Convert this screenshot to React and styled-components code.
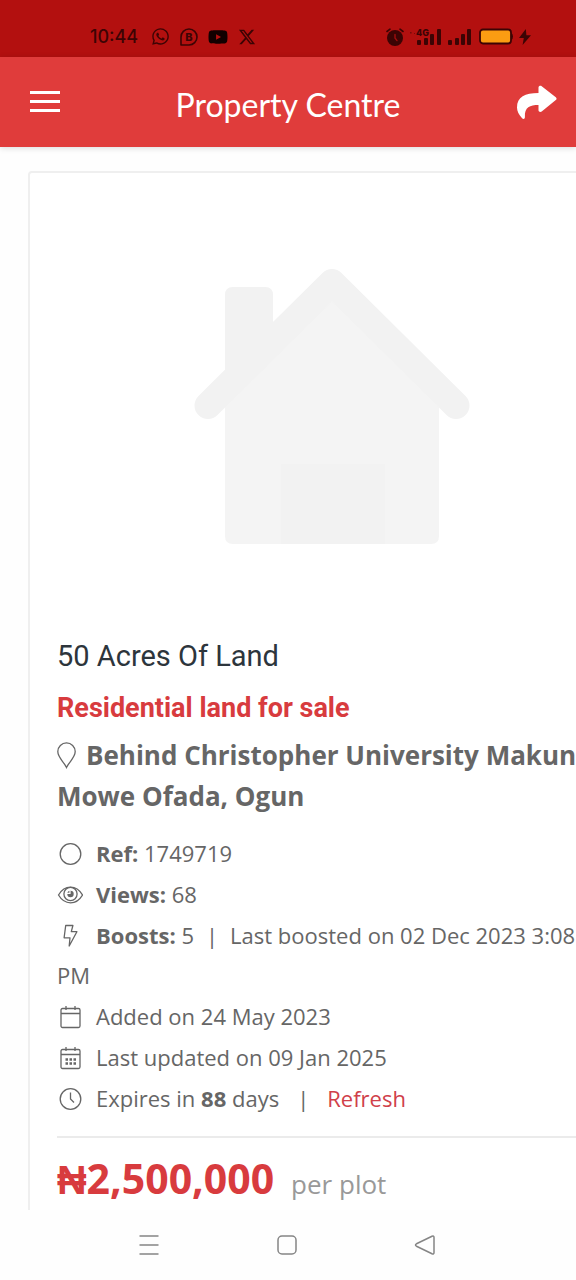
import React from 'react';
import styled, { createGlobalStyle } from 'styled-components';
import { FaWhatsapp, FaYoutube } from 'react-icons/fa';
import { FaXTwitter } from 'react-icons/fa6';

const GlobalStyle = createGlobalStyle`
  * {
    box-sizing: border-box;
  }

  body {
    margin: 0;
    background: #fefefe;
    color: #666;
    font-family: 'Open Sans', sans-serif;
  }
`;

const Screen = styled.div`
  display: flex;
  flex-direction: column;
  height: 100vh;
`;

const StatusBar = styled.div`
  display: flex;
  flex: none;
  align-items: center;
  justify-content: space-between;
  padding: 24px 45px 8px 90px;
  background: #b3100f;
  color: #3c0404;
`;

const StatusGroup = styled.div`
  display: flex;
  align-items: center;
  gap: ${({ $gap }) => $gap}px;

  svg {
    display: block;
  }
`;

const Clock = styled.time`
  margin-right: 3px;
  font: 500 18px/25px Inter, sans-serif;
`;

const Header = styled.header`
  position: relative;
  display: flex;
  flex: none;
  align-items: center;
  justify-content: space-between;
  padding: 0 19px 0 30px;
  height: 90px;
  background: #e03c3b;
  color: #fff;
  box-shadow: 0 1px 6px rgba(0, 0, 0, 0.15);
`;

const IconButton = styled.button`
  display: flex;
  padding: 0;
  border: 0;
  background: none;
  color: inherit;
`;

const Brand = styled.a`
  padding-top: 6px;
  color: #fff;
  font: 400 32px/44px Lato, sans-serif;
  text-decoration: none;
`;

const Main = styled.main`
  flex: 1;
  min-height: 0;
  overflow: hidden auto;
  scrollbar-width: none;
`;

/* the listing card is wider than the phone, so it runs off to the right */
const Card = styled.article`
  margin: 24px -60px 24px 28px;
  padding: 0 27px 60px;
  border: 2px solid #efefef;
  border-radius: 4px;
  background: #fff;
`;

const Placeholder = styled.div`
  display: flex;
  justify-content: center;
  padding: 95px 0;
`;

const Title = styled.h1`
  margin: 0 0 18px;
  color: #2d353c;
  font: 400 29px/34px Roboto, sans-serif;
`;

const Category = styled.h2`
  margin: 0 0 10px;
  color: #d83b3e;
  font: 700 27px/34px Roboto, sans-serif;
`;

const Address = styled.address`
  margin-bottom: 16px;
  font-size: 26px;
  font-style: normal;
  font-weight: 700;
  line-height: 41px;

  svg {
    margin-right: 10px;
    vertical-align: -4px;
  }
`;

const Details = styled.ul`
  display: grid;
  gap: 1px;
  margin: 0 0 18px;
  padding: 0;
  list-style: none;
  font-size: 22px;
  line-height: 40px;
`;

const Detail = styled.li`
  svg {
    margin-right: 13px;
    vertical-align: -4px;
  }
`;

const Divider = styled.span`
  margin: 0 ${({ $space }) => $space}px;
`;

const RefreshLink = styled.a`
  color: #d0404a;
  text-decoration: none;
`;

const PriceRow = styled.div`
  display: flex;
  align-items: baseline;
  gap: 17px;
  padding-top: 15px;
  border-top: 2px solid #ebebeb;
  line-height: 50px;
`;

const Price = styled.strong`
  color: #d83b3e;
  font-size: 41px;
`;

const Unit = styled.span`
  color: #999;
  font-size: 26px;
`;

const NavBar = styled.nav`
  display: flex;
  flex: none;
  align-items: center;
  justify-content: center;
  gap: 116px;
  padding-right: 3px;
  height: 70px;
  background: #fefefe;
  color: #858585;
`;

const BusinessIcon = () => (
  <svg width="18" height="18" viewBox="0 0 18 18" fill="none" stroke="currentColor" strokeWidth="1.6">
    <path d="M1 17V9a8 8 0 1 1 8 8z" strokeLinejoin="round" />
    <text x="9" y="13" textAnchor="middle" fill="currentColor" stroke="none" fontFamily="Inter, sans-serif" fontSize="11" fontWeight="800">B</text>
  </svg>
);

const AlarmIcon = () => (
  <svg width="18" height="18" viewBox="0 0 18 18" fill="none" stroke="currentColor" strokeLinecap="round">
    <circle cx="9" cy="10" r="8" fill="currentColor" stroke="none" />
    <path d="M1 3.500 4 1.2M17 3.500l-3-2.3" strokeWidth="1.6" />
    <path d="M9 6.5V10l2 2.6" stroke="#a10d0d" strokeWidth="1.4" />
  </svg>
);

const MobileDataIcon = () => (
  <svg width="32" height="18" viewBox="0 0 32 18" fill="currentColor">
    <path d="M0 4h1.6v1.6H0zM4 5h1v1H4z" opacity=".5" />
    <text x="6" y="8" fontFamily="Inter, sans-serif" fontSize="9" fontWeight="800">4G</text>
    <rect x="7" y="12" width="4" height="5" rx="1" />
    <rect x="14" y="10" width="4" height="7" rx="1" />
    <rect x="20" y="6" width="4" height="11" rx="1" />
    <rect x="27" y="1" width="4" height="16" rx="1" />
  </svg>
);

const SignalIcon = () => (
  <svg width="24" height="18" viewBox="0 0 24 18" fill="currentColor">
    <rect x="0" y="12" width="4" height="5" rx="1" />
    <rect x="7" y="10" width="4" height="7" rx="1" />
    <rect x="13" y="6" width="4" height="11" rx="1" />
    <rect x="19" y="1" width="4" height="16" rx="1" />
  </svg>
);

const BatteryIcon = () => (
  <svg width="35" height="18" viewBox="0 0 35 18">
    <rect x="2" y="1.500" width="31" height="14" rx="3" fill="#fb9c12" stroke="currentColor" strokeWidth="1.8" />
    <path d="M33 5q2 .5 2 3.500t-2 3.500z" fill="currentColor" />
  </svg>
);

const ChargingIcon = () => (
  <svg width="12" height="18" viewBox="0 0 12 18" fill="currentColor">
    <path d="M6.8 1 0 10h4.8L3.6 17 12 7.2H7.4z" />
  </svg>
);

const MenuIcon = () => (
  <svg width="30" height="22" viewBox="0 0 30 22" fill="currentColor">
    <path d="M0 0h30v3H0zM0 9h30v3H0zM0 18h30v3H0z" />
  </svg>
);

const ShareIcon = () => (
  <svg width="41" height="36" viewBox="0 0 41 36" fill="currentColor">
    <path d="M22.5 3.5c0-1.6 2-2.3 3.2-1.3L39.8 13.2c1 .8 1 2 0 2.8L25.7 27.5c-1.2 1-3.2.3-3.2-1.2V21C14 21 8.4 23 8.9 33c.1 2-1.7 2.700-3 .9C3 31 1 27.300 1 23.500 1 13 9 9 22.500 9z" />
  </svg>
);

const HouseIcon = () => (
  <svg width="276" height="276" viewBox="0 0 276 276">
    <path d="M31 132 138 28l107 104v136q0 8-8 8H39q-8 0-8-8z" fill="#f4f4f4" />
    <path d="M87 196h104v80H87zM31 135V27q0-8 8-8h32q8 0 8 8v62z" fill="#f2f2f2" />
    <path d="m14 137.500 124-123 124 123" fill="none" stroke="#f2f2f2" strokeWidth="27" strokeLinecap="round" strokeLinejoin="round" />
  </svg>
);

const PinIcon = () => (
  <svg width="19" height="27" viewBox="0 0 19 27" fill="none" stroke="#666" strokeWidth="1.3">
    <path d="M9.500 25.500C7 20 .8 15.500.8 9.600a8.700 8.700 0 0 1 17.400 0c0 5.900-6.200 10.400-8.700 15.900z" />
  </svg>
);

const LineIcon = ({ children }) => (
  <svg width="26" height="24" viewBox="0 0 26 24" fill="none" stroke="#666" strokeWidth="1.3">
    {children}
  </svg>
);

const CircleIcon = () => (
  <LineIcon>
    <circle cx="13.500" cy="12" r="10.300" />
  </LineIcon>
);

const EyeIcon = () => (
  <LineIcon>
    <path d="M1.500 12c3-5 7-7.800 12-7.800s9 2.800 12 7.800c-3 5-7 7.800-12 7.800S4.500 17 1.500 12z" />
    <circle cx="13.500" cy="11" r="6.600" />
    <circle cx="13.500" cy="11" r="3.200" fill="#666" stroke="none" />
    <path d="M13 7.500v2.800h-3" stroke="#fff" strokeWidth="1.200" />
  </LineIcon>
);

const BoltIcon = () => (
  <LineIcon>
    <path d="M8.700 1.500h7.200l-1.600 6.200h5.600L12.200 22l.8-8.200H7.100z" strokeLinejoin="round" />
  </LineIcon>
);

const CalendarIcon = ({ dots }) => (
  <LineIcon>
    <rect x="4" y="3.500" width="19" height="19" rx="1.500" />
    <path d="M4 8.500h19M9 1v4M18 1v4" />
    {dots && <path d="M8.500 13.500H19M8.500 17.500H19" strokeWidth="2.400" strokeDasharray="2.500 1.500" />}
  </LineIcon>
);

const ClockIcon = () => (
  <LineIcon>
    <circle cx="13.500" cy="12" r="10.300" />
    <path d="M13.500 5.500V12l3.500 3.500" />
  </LineIcon>
);

const App = () => (
  <Screen>
    <GlobalStyle />
    <StatusBar>
      <StatusGroup $gap={10}>
        <Clock>10:44</Clock>
        <FaWhatsapp size={19} />
        <BusinessIcon />
        <FaYoutube size={20} color="#120000" />
        <FaXTwitter size={18} />
      </StatusGroup>
      <StatusGroup $gap={6}>
        <AlarmIcon />
        <MobileDataIcon />
        <SignalIcon />
        <BatteryIcon />
        <ChargingIcon />
      </StatusGroup>
    </StatusBar>

    <Header>
      <IconButton aria-label="Menu">
        <MenuIcon />
      </IconButton>
      <Brand href="#home">Property Centre</Brand>
      <IconButton aria-label="Share">
        <ShareIcon />
      </IconButton>
    </Header>

    <Main>
      <Card>
        <Placeholder>
          <HouseIcon />
        </Placeholder>
        <Title>50 Acres Of Land</Title>
        <Category>Residential land for sale</Category>
        <Address>
          <PinIcon />
          Behind Christopher University Makun Mowe Ofada, Ogun
        </Address>
        <Details>
          <Detail>
            <CircleIcon />
            <b>Ref:</b> 1749719
          </Detail>
          <Detail>
            <EyeIcon />
            <b>Views:</b> 68
          </Detail>
          <Detail>
            <BoltIcon />
            <b>Boosts:</b> 5<Divider $space={12}>|</Divider>Last boosted on 02 Dec 2023 3:08 PM
          </Detail>
          <Detail>
            <CalendarIcon />
            Added on 24 May 2023
          </Detail>
          <Detail>
            <CalendarIcon dots />
            Last updated on 09 Jan 2025
          </Detail>
          <Detail>
            <ClockIcon />
            Expires in <b>88</b> days<Divider $space={18}>|</Divider>
            <RefreshLink href="#refresh">Refresh</RefreshLink>
          </Detail>
        </Details>
        <PriceRow>
          <Price>₦2,500,000</Price>
          <Unit>per plot</Unit>
        </PriceRow>
      </Card>
    </Main>

    <NavBar>
      <IconButton aria-label="Recent apps">
        <svg width="22" height="22" viewBox="0 0 22 22" stroke="currentColor" strokeWidth="1.500">
          <path d="M1.500 2h19M1.500 11h19M1.500 20h19" />
        </svg>
      </IconButton>
      <IconButton aria-label="Home screen">
        <svg width="22" height="22" viewBox="0 0 22 22" fill="none" stroke="currentColor" strokeWidth="1.500">
          <rect x="2" y="2" width="18" height="18" rx="4" />
        </svg>
      </IconButton>
      <IconButton aria-label="Back">
        <svg width="22" height="22" viewBox="0 0 22 22" fill="none" stroke="currentColor" strokeWidth="1.500" strokeLinejoin="round">
          <path d="M2.500 9.800 18 2.300q2-.8 2 1.200v15q0 2-2 1.200L2.500 12.200q-2-1.200 0-2.400z" />
        </svg>
      </IconButton>
    </NavBar>
  </Screen>
);

export default App;
